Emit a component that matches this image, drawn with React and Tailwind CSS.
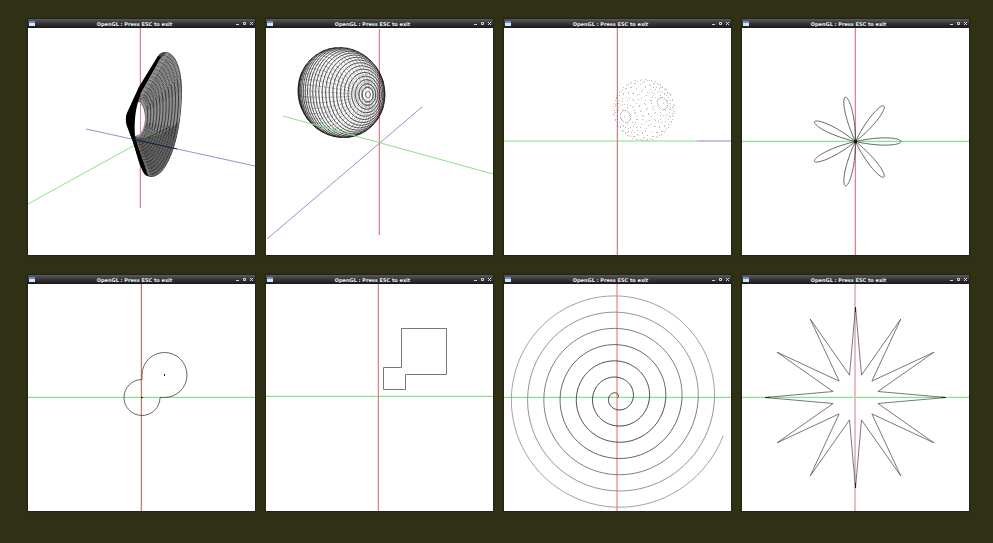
import React from "react";

const RED = "#e08088";
const GREEN = "#86e486";
const BLUE = "#9492d4";
const INK = "#555555";

const toPath = (pts) =>
  pts.map(([x, y], i) => `${i ? "L" : "M"}${x.toFixed(2)} ${y.toFixed(2)}`).join("");

const rad = (deg) => (deg * Math.PI) / 180;

/* A one-pixel axis with a faint fringe on its leading side. */
function VLine({ x, from = 0, to = 227, color = RED }) {
  return (
    <g fill={color}>
      <rect x={x} y={from} width="1" height={to - from} />
      <rect x={x - 1} y={from} width="1" height={to - from} opacity=".25" />
    </g>
  );
}

function HLine({ y }) {
  return (
    <g fill={GREEN}>
      <rect x="0" y={y} width="227" height="1" />
      <rect x="0" y={y - 1} width="227" height="1" opacity=".25" />
    </g>
  );
}

function Cross({ x = 113, y = 113, red = RED }) {
  return (
    <g>
      <HLine y={y} />
      <VLine x={x} color={red} />
    </g>
  );
}

const DISC_FACE =
  "M138 25C148 25 153.500 42 153.500 62C153.500 105 141 148.500 124 148.500C121 148 120 146 119 143L110 118L107 108C112 108 117 99 117 89C117 80 113 74 110.500 74L113 65L132 31Z";

/* Surface of revolution: rings that run from the inner hole to the outer rim. */
function Disc() {
  const rim = { cx: 130.5, cy: 86.5, rx: 22, ry: 63, tilt: 7 };
  const hole = { cx: 108.5, cy: 91, rx: 8, ry: 17, tilt: 6 };
  const at = (t, a) => {
    const mix = (k) => hole[k] + (rim[k] - hole[k]) * t;
    const tilt = rad(mix("tilt"));
    const u = mix("rx") * Math.cos(a);
    const v = mix("ry") * Math.sin(a);
    return [
      mix("cx") + u * Math.cos(tilt) - v * Math.sin(tilt),
      mix("cy") + u * Math.sin(tilt) + v * Math.cos(tilt),
    ];
  };
  const arcs = (count, from, to) => {
    let d = "";
    for (let i = 0; i <= count; i++) {
      const pts = [];
      for (let a = from; a <= to; a += 3) pts.push(at(i / count, rad(a)));
      d += toPath(pts);
    }
    return d;
  };
  const spokes = [];
  for (let d = -80; d <= 84; d += 3) {
    if (Math.abs(d + 8) < 18) continue;
    spokes.push(toPath([at(0.1, rad(d)), at(1, rad(d))]));
  }
  return (
    <g fill="none">
      <clipPath id="disc-face">
        <path d={DISC_FACE} />
      </clipPath>
      <path d="M137 24C148 24 154 42 154 62C154 105 141 149 123 149C118 149 115 143 111 134L105 114L99 98C97 91 98 87 100 83L111 59L130 28C132 25 134 24 137 24Z" fill="#444" />
      <path d="M130 28L111 59L100 83C98 87 97 91 99 98L105 114L111 134C114 142 116 148 120 148L110 118L107 100L110 74L113 65L133 29Z" fill="#000" />
      <path d={DISC_FACE} fill="#909090" />
      <g clipPath="url(#disc-face)">
        <path d={arcs(12, -40, 20)} stroke="#1a1a1a" strokeWidth=".75" />
        <path d={arcs(14, -94, -40)} stroke="#222" strokeWidth=".5" strokeDasharray="3 .7" />
        <path d={arcs(14, 20, 94)} stroke="#1a1a1a" strokeWidth=".65" strokeDasharray="2 .8" />
        <path d={spokes.join("")} stroke="#111" strokeWidth=".5" strokeDasharray="1 1.6" />
        <path d="M107 108C113 112 136 110 153 91C149 118 138 145 124 149C120 146 113 127 107 108Z" fill="#111" opacity=".3" />
      </g>
      <path d="M110 74C114 74 117 82 117 90C117 99 113 108 107 108C106 97 107 84 110 74Z" fill="#fff" />
      <rect x="112" y="76" width="1" height="30" fill={RED} />
      <path d="M112.500 67V74M112.500 116V126" stroke="#993344" strokeDasharray="2 1" />
      <path d="M104 111L149 121" stroke="#17174d" />
      <path d="M119 110L142 99" stroke="#124012" strokeWidth=".8" />
    </g>
  );
}

/* Points of a unit sphere whose pole faces (px, py) on the screen. */
function spherePoint(px, py, lat, lon) {
  const pz = Math.sqrt(1 - px * px - py * py);
  const h = Math.hypot(px, pz);
  const u = [pz / h, 0, -px / h];
  const v = [(-py * px) / h, h, (-py * pz) / h];
  const s = Math.sin(lat);
  const c = Math.cos(lat);
  const a = s * Math.cos(lon);
  const b = s * Math.sin(lon);
  return [c * px + a * u[0] + b * v[0], c * py + a * u[1] + b * v[1], c * pz + a * u[2] + b * v[2]];
}

function WireSphere() {
  const place = (lat, lon) => {
    const [x, y, z] = spherePoint(0.61, 0.02, rad(lat), rad(lon));
    const w = z < 0 ? z * z : 0;
    return [75.5 + x * 43.5 - w * 10, 64.5 + y * 45 + x * 2 + w * 12, z];
  };
  const front = [];
  const back = [];
  for (let lat = 4; lat < 180; lat += 5) {
    for (let lon = 0; lon < 360; lon += 6) {
      const a = place(lat, lon);
      const b = place(lat, lon + 6);
      (b[2] >= 0 ? front : back).push(toPath([a, b]));
    }
  }
  const ribs = [];
  for (let lon = 0; lon < 360; lon += 7.5) {
    const pts = [];
    for (let lat = 9; lat <= 176; lat += 5) {
      const p = place(lat, lon);
      if (p[2] > -0.1) pts.push(p);
    }
    if (pts.length > 1) ribs.push(toPath(pts));
  }
  return (
    <g fill="none" stroke="#000">
      <path d={back.join("")} strokeWidth=".5" opacity=".3" />
      <path d={front.join("")} strokeWidth=".65" />
      <path d={ribs.join("")} strokeWidth=".5" strokeDasharray="1.5 1" opacity=".65" />
    </g>
  );
}

function DottedSphere() {
  const dots = [];
  for (let lat = 12; lat < 180; lat += 12) {
    for (let lon = 0; lon < 360; lon += 15) {
      const [x, y] = spherePoint(-0.62, 0.22, rad(lat), rad(lon));
      const px = Math.floor(140 + x * 30.5);
      const py = Math.floor(82 + y * 30.5);
      dots.push(`M${px} ${py}h1v1h-1z`);
    }
  }
  return <path d={dots.join("")} fill="#555" opacity=".38" />;
}

function Rose() {
  const pts = [];
  for (let d = 0; d <= 180; d += 0.5) {
    const r = 45.5 * Math.cos(7 * rad(d));
    pts.push([113.5 + r * Math.cos(rad(d)), 113.5 - r * Math.sin(rad(d))]);
  }
  return (
    <g>
      <rect x="113" y="101" width="1" height="25" fill="#777" />
      <path d={toPath(pts)} fill="none" stroke={INK} strokeWidth=".9" />
      <circle cx="113.500" cy="113.500" r="1.8" fill="#111" />
    </g>
  );
}

function Spiral() {
  const shades = ["#222", "#333", "#3c3c3c", "#555", "#707070", "#888", "#999"];
  return shades.map((shade, turn) => {
    const pts = [];
    const end = turn === 6 ? 340 : 360;
    for (let d = 0; d <= end; d += 4) {
      const r = 16.25 * (turn + d / 360);
      pts.push([113 + r * Math.cos(rad(d)), 113.5 - r * Math.sin(rad(d))]);
    }
    return <path key={turn} d={toPath(pts)} fill="none" stroke={shade} strokeWidth=".9" />;
  });
}

function Star() {
  const pts = [];
  for (let i = 0; i < 24; i++) {
    const r = i % 2 ? 23.2 : 90.5;
    pts.push([113.5 + r * Math.cos(rad(i * 15)), 113.5 - r * Math.sin(rad(i * 15))]);
  }
  return (
    <g>
      <path d={toPath(pts) + "Z"} fill="none" stroke={INK} strokeWidth=".8" />
      <path d="M23 113h5v1h-5zM199 113h5v1h-5zM113 23h1v5h-1zM113 199h1v5h-1z" fill="#222" />
    </g>
  );
}

const scenes = [
  {
    name: "Surface of revolution",
    art: (
      <>
        <VLine x={112} to={180} />
        <path d="M0 176L107 117" stroke={GREEN} />
        <path d="M58 101L227 138" stroke={BLUE} />
        <Disc />
      </>
    ),
  },
  {
    name: "Wire sphere",
    art: (
      <>
        <VLine x={113} from={1} to={207} />
        <WireSphere />
        <path d="M17 88L227 146" stroke={GREEN} />
        <path d="M156 79L1 211" stroke={BLUE} />
      </>
    ),
  },
  {
    name: "Dotted sphere",
    art: (
      <>
        <rect x="0" y="112" width="193" height="2" fill="#bff0bf" />
        <rect x="193" y="112" width="34" height="2" fill="#c6c1e6" />
        <VLine x={113} color="#d17f80" />
        <DottedSphere />
      </>
    ),
  },
  { name: "Rose", art: (<><Cross /><Rose /></>) },
  {
    name: "Two circles",
    art: (
      <>
        <Cross red="#cf7474" />
        <path d="M114 95.500A18 18 0 1 0 132 113.500H136.500A22.500 22.500 0 1 0 114 91Z" fill="none" stroke={INK} strokeWidth=".9" />
        <path d="M113 113h2v1h-2zM136 90h1v2h-1z" fill="#111" />
      </>
    ),
  },
  {
    name: "Two squares",
    art: (
      <>
        <Cross x={112} y={112} />
        <path d="M135.500 44.500H180.500V90.500H139.500V105.500H117.500V83.500H135.500Z" fill="none" stroke="#777" />
      </>
    ),
  },
  {
    name: "Spiral",
    art: (
      <>
        <HLine y={113} />
        <rect x="112" y="0" width="2" height="227" fill="#f3b4b4" />
        <Spiral />
      </>
    ),
  },
  {
    name: "Star",
    art: (
      <>
        <HLine y={113} />
        <rect x="112" y="0" width="2" height="227" fill="#edbcbf" />
        <Star />
      </>
    ),
  },
];

function TitleButton({ label, children }) {
  return (
    <button type="button" aria-label={label} className="flex h-[9px] w-[7px] items-center justify-center">
      <svg viewBox="0 0 3 3" className="size-[3px]" fill="none" stroke="#e5e5e5" strokeWidth=".9">
        {children}
      </svg>
    </button>
  );
}

function GLWindow({ name, art }) {
  return (
    <section className="min-w-0 bg-white shadow-[0_0_1px_1px_#24241a]">
      <header className="flex h-[9px] items-center bg-linear-to-b from-[#5a5a5a] via-[#353535] to-[#191919] pl-px">
        <svg viewBox="0 0 6 5" className="h-[5px] w-[6px]">
          <path d="M0 0h6v5H0z" fill="#dde3e8" />
          <path d="M0 0h6v2H0z" fill="#6393cf" />
        </svg>
        <h2 className="flex-1 text-center font-['DejaVu_Sans',sans-serif] text-[5px] leading-[8px] font-bold whitespace-nowrap text-[#ececec]">
          OpenGL : Press ESC to exit
        </h2>
        <div className="flex">
          <TitleButton label="Minimize"><path d="M0 2.500H3" /></TitleButton>
          <TitleButton label="Maximize"><path d="M.5 .5H2.500V2.500H.5Z" /></TitleButton>
          <TitleButton label="Close"><path d="M0 0L3 3M3 0L0 3" /></TitleButton>
        </div>
      </header>
      <svg viewBox="0 0 227 227" className="block aspect-square w-full" role="img" aria-label={name}>
        {art}
      </svg>
    </section>
  );
}

export default function App() {
  return (
    <main className="min-h-screen bg-[#303015] pt-[19px] pr-6 pb-8 pl-7">
      <div className="grid grid-cols-4 gap-x-[11px] gap-y-5">
        {scenes.map((scene) => (
          <GLWindow key={scene.name} {...scene} />
        ))}
      </div>
    </main>
  );
}
